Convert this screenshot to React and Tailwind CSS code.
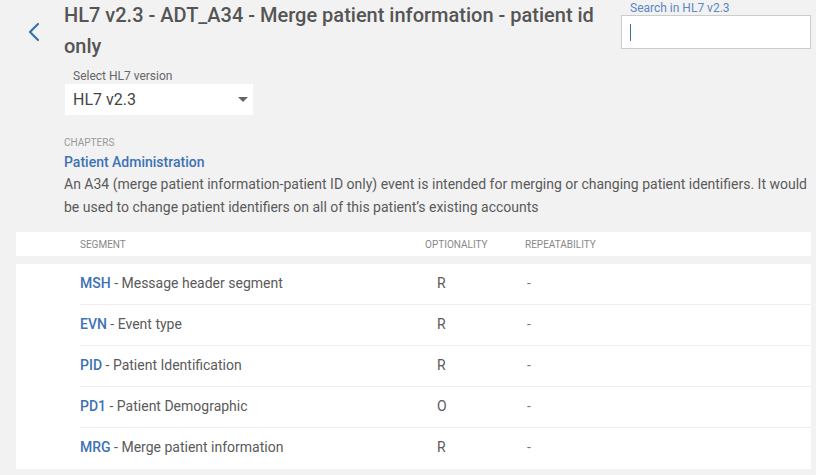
import { useState } from 'react'

const ROWS = [
  ['MSH', 'Message header segment', 'R'],
  ['EVN', 'Event type', 'R'],
  ['PID', 'Patient Identification', 'R'],
  ['PD1', 'Patient Demographic', 'O'],
  ['MRG', 'Merge patient information', 'R'],
]

export default function App() {
  const [q, setQ] = useState('')

  return (
    <div className="w-[816px] h-[475px] overflow-hidden bg-[#f2f2f2] text-[#555] font-['Roboto',sans-serif]">
      {/* Header */}
      <div className="flex">
        <div className="w-[64px] shrink-0 pl-[27px] pt-[22px]">
          <svg width="14" height="20" viewBox="0 0 14 20" fill="none">
            <path d="M11 2 L3 10 L11 18" stroke="#3a6fb5" strokeWidth="2.2" strokeLinecap="round" strokeLinejoin="round" />
          </svg>
        </div>
        <div className="flex-1">
          <h1 className="text-[20px] leading-[31px] font-medium text-[#555] w-[545px]">
            HL7 v2.3 - ADT_A34 - Merge patient information - patient id only
          </h1>
          <div className="mt-[7px] ml-[1px]">
            <div className="text-[12px] leading-[14px] text-[#666] pl-[8px]">Select HL7 version</div>
            <div className="mt-[1px] w-[188px] h-[31px] bg-white flex items-center justify-between pl-[8px] pr-[5px]">
              <span className="text-[16px] text-[#444]">HL7 v2.3</span>
              <svg width="10" height="5" viewBox="0 0 10 5"><path d="M0 0 L10 0 L5 5 Z" fill="#666" /></svg>
            </div>
          </div>
        </div>
        <div className="w-[195px] shrink-0 pt-[1px]">
          <div className="text-[12px] leading-[14px] text-[#5b87c5] pl-[9px]">Search in HL7 v2.3</div>
          <div className="w-[190px] h-[34px] border border-[#ccc] bg-white flex items-center pl-[8px]">
            <input
              value={q}
              onChange={e => setQ(e.target.value)}
              className="w-full h-full outline-none text-[16px] caret-[#3a6fb5]"
            />
            {!q && <span className="absolute w-px h-[17px] bg-[#3a6fb5]" />}
          </div>
        </div>
      </div>

      {/* Chapter info */}
      <div className="pl-[64px] pr-[8px] mt-[22px]">
        <div className="text-[10px] leading-[12px] text-[#999] uppercase">Chapters</div>
        <div className="mt-[4px] text-[14px] leading-[18px] font-medium text-[#3d72b4]">Patient Administration</div>
        <p className="mt-[2px] text-[14px] leading-[23px] text-[#5a5a5a]">
          An A34 (merge patient information-patient ID only) event is intended for merging or changing patient identifiers. It would be used to change patient identifiers on all of this patient’s existing accounts
        </p>
      </div>

      {/* Table */}
      <div className="ml-[16px] mr-[5px] mt-[13px]">
        <div className="h-[24px] bg-white flex items-center text-[10px] text-[#888] uppercase">
          <div className="w-[409px] pl-[64px]">Segment</div>
          <div className="w-[100px]">Optionality</div>
          <div>Repeatability</div>
        </div>
        <div className="mt-[8px] bg-white pl-[64px]">
          {ROWS.map(([code, desc, opt], i) => (
            <div key={code} className={`h-[41px] flex items-center text-[14px] pb-[2px] ${i < ROWS.length - 1 ? 'border-b border-[#eee]' : ''}`}>
              <div className="w-[345px]">
                <span className="font-medium text-[#3d72b4]">{code}</span>
                <span className="text-[#5a5a5a]"> - {desc}</span>
              </div>
              <div className="w-[102px] pl-[12px] text-[#5a5a5a]">{opt}</div>
              <div className="text-[#777]">-</div>
            </div>
          ))}
        </div>
      </div>
    </div>
  )
}
